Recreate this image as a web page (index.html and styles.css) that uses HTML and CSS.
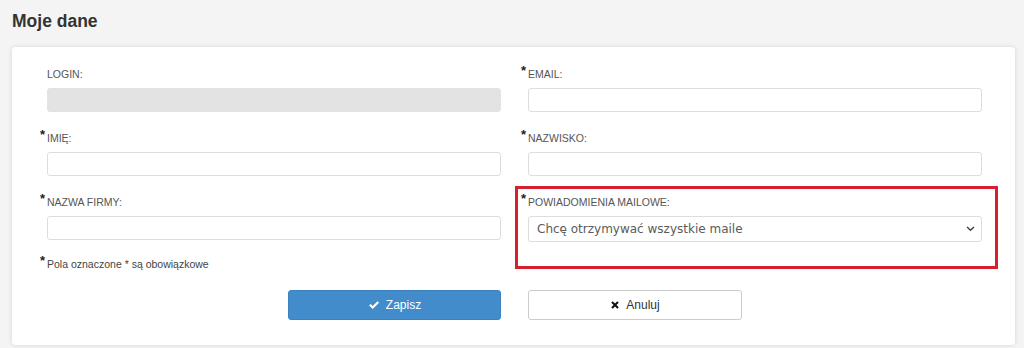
FILE: index.html
```html
<!DOCTYPE html>
<html lang="pl">
<head>
<meta charset="utf-8">
<title>Moje dane</title>
<link rel="stylesheet" href="styles.css">
</head>
<body>
<h1 class="title">Moje dane</h1>
<div class="card">
  <form class="grid">
    <div class="field">
      <label class="label">LOGIN:</label>
      <input class="input input-disabled" type="text" disabled>
    </div>
    <div class="field">
      <label class="label"><span class="req">*</span>EMAIL:</label>
      <input class="input" type="text">
    </div>
    <div class="field">
      <label class="label"><span class="req">*</span>IMIĘ:</label>
      <input class="input" type="text">
    </div>
    <div class="field">
      <label class="label"><span class="req">*</span>NAZWISKO:</label>
      <input class="input" type="text">
    </div>
    <div class="field">
      <label class="label"><span class="req">*</span>NAZWA FIRMY:</label>
      <input class="input" type="text">
    </div>
    <div class="field highlighted">
      <label class="label"><span class="req">*</span>POWIADOMIENIA MAILOWE:</label>
      <div class="select-wrap">
        <select class="select">
          <option>Chcę otrzymywać wszystkie maile</option>
        </select>
        <svg class="chevron" viewBox="0 0 10 7" width="9" height="6"><path d="M1 1.2 L5 5 L9 1.2" fill="none" stroke="#444" stroke-width="1.8"/></svg>
      </div>
    </div>
    <div class="note"><span class="req">*</span>Pola oznaczone <span class="star">*</span> są obowiązkowe</div>
    <div></div>
    <div class="btn-cell left">
      <button type="button" class="btn btn-primary">
        <svg viewBox="0 0 16 16" width="12" height="12"><path d="M1.5 8.6 L3.6 6.5 L6.3 9.2 L12.6 2.9 L14.7 5 L6.3 13.4 Z" fill="#fff"/></svg>
        Zapisz
      </button>
    </div>
    <div class="btn-cell">
      <button type="button" class="btn btn-default">
        <svg viewBox="0 0 16 16" width="10" height="10"><path d="M2 4.3 L4.3 2 L8 5.7 L11.7 2 L14 4.3 L10.3 8 L14 11.7 L11.7 14 L8 10.3 L4.3 14 L2 11.7 L5.7 8 Z" fill="#111"/></svg>
        Anuluj
      </button>
    </div>
  </form>
</div>
</body>
</html>
```

FILE: styles.css
```css
* { box-sizing: border-box; }
html, body { margin: 0; padding: 0; }
body {
  background: #f4f4f4;
  font-family: "Liberation Sans", Arial, sans-serif;
  color: #333;
  padding: 0 9px 0 12px;
  height: 348px;
  overflow: hidden;
}
.title {
  margin: 0;
  padding-top: 10px;
  height: 47px;
  font-size: 17.5px;
  line-height: 22px;
  font-weight: bold;
  color: #333;
}
.card {
  background: #fff;
  border-radius: 4px;
  box-shadow: 0 0 5px rgba(0,0,0,0.12);
  padding: 20px 33px 25px 35px;
  height: 298px;
}
.grid {
  display: grid;
  grid-template-columns: 454px 454px;
  column-gap: 27px;
  row-gap: 19px;
  margin: 0;
}
.field {
  display: flex;
  flex-direction: column;
  position: relative;
}
.label {
  display: block;
  font-size: 10.5px;
  line-height: 14px;
  height: 14px;
  color: #555;
  margin-bottom: 7px;
  position: relative;
}
.req {
  position: absolute;
  left: -7px;
  top: -3px;
  font-size: 13px;
  font-weight: bold;
  color: #222;
}
.input {
  height: 24px;
  border: 1px solid #ddd;
  border-radius: 3px;
  background: #fff;
  font: inherit;
  width: 100%;
}
.input-disabled {
  background: #e3e3e3;
  border-color: #e3e3e3;
}
.highlighted::after {
  content: "";
  position: absolute;
  left: -13px;
  right: -16px;
  top: -9px;
  bottom: -27px;
  border: 3px solid #d7202e;
  pointer-events: none;
}
.select-wrap {
  position: relative;
  height: 26px;
}
.select {
  appearance: none;
  -webkit-appearance: none;
  width: 100%;
  height: 26px;
  border: 1px solid #ddd;
  border-radius: 3px;
  background: #fff;
  padding: 0 8px;
  font-family: "DejaVu Sans", sans-serif;
  font-size: 12px;
  color: #5a5a5a;
}
.chevron {
  position: absolute;
  right: 7px;
  top: 10px;
}
.note {
  position: relative;
  font-size: 10.5px;
  line-height: 14px;
  color: #444;
  margin-top: -4px;
}
.note .req { top: -3px; }
.star { color: #444; }
.btn-cell {
  display: flex;
}
.btn-cell.left { justify-content: flex-end; }
.btn {
  width: 213px;
  height: 30px;
  border-radius: 3px;
  font-family: "Liberation Sans", Arial, sans-serif;
  font-size: 12px;
  display: flex;
  align-items: center;
  justify-content: center;
  gap: 6px;
  cursor: pointer;
}
.btn-primary {
  background: #438ccc;
  border: 1px solid #3d82c0;
  color: #fff;
}
.btn-default {
  background: #fff;
  border: 1px solid #ccc;
  color: #333;
  width: 214px;
}
```
